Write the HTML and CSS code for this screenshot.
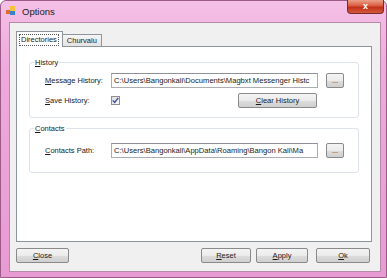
FILE: index.html
```html
<!DOCTYPE html>
<html>
<head>
    <title>Options</title>
    <link rel="stylesheet" href="styles.css">
</head>
<body>
    <div class="window">
        <div class="titlebar">
            <svg class="app-icon" width="10" height="10" viewBox="0 0 10 10">
                <rect x="0" y="4" width="4" height="4" fill="#e06a2a"/>
                <rect x="4" y="0" width="5" height="5" fill="#f2c23a"/>
                <rect x="4" y="5" width="5" height="4" fill="#3b7fd0"/>
            </svg>
            <span class="title">Options</span>
            <div class="close-btn">x</div>
        </div>

        <div class="client">
            <div class="tabs">
                <div class="tab selected"><span class="focus">Directories</span></div>
                <div class="tab">Churvalu</div>
            </div>
            <div class="tab-page">
                <div class="group history">
                    <span class="group-title"><u>H</u>istory</span>
                    <div class="row">
                        <span class="label"><u>M</u>essage History:</span>
                        <div class="textbox">C:\Users\Bangonkali\Documents\Magbxt Messenger Histc</div>
                        <div class="button small">...</div>
                    </div>
                    <div class="row">
                        <span class="label"><u>S</u>ave History:</span>
                        <div class="field">
                            <div class="checkbox">
                                <svg width="7" height="7" viewBox="0 0 7 7">
                                    <path d="M0.8 3.4 L2.7 5.5 L6.3 0.9" fill="none" stroke="#3a4fa0" stroke-width="1.4"/>
                                </svg>
                            </div>
                            <div class="button clear"><u>C</u>lear History</div>
                        </div>
                    </div>
                </div>

                <div class="group contacts">
                    <span class="group-title"><u>C</u>ontacts</span>
                    <div class="row">
                        <span class="label"><u>C</u>ontacts Path:</span>
                        <div class="textbox">C:\Users\Bangonkali\AppData\Roaming\Bangon Kali\Ma</div>
                        <div class="button small">...</div>
                    </div>
                </div>
            </div>

            <div class="footer">
                <div class="button wide"><u>C</u>lose</div>
                <div class="spacer"></div>
                <div class="button wide reset"><u>R</u>eset</div>
                <div class="button wide apply"><u>A</u>pply</div>
                <div class="button wide ok"><u>O</u>k</div>
            </div>
        </div>
    </div>
</body>
</html>
```

FILE: styles.css
```css
body {
    margin: 0;
    font-family: "Liberation Sans", Arial, sans-serif;
    font-size: 7.5px;
    color: #1a1a1a;
    overflow: hidden;
}
.window {
    width: 387px;
    height: 278px;
    box-sizing: border-box;
    padding: 0 5px 5px 8px;
    background: linear-gradient(180deg, #f4c0e6 0%, #eeaadc 25%, #e79bd2 100%);
    border: 1px solid #9c5a88;
    border-radius: 6px 6px 0 0;
    display: flex;
    flex-direction: column;
}
.titlebar {
    height: 21px;
    display: flex;
    align-items: flex-start;
    margin-left: -3px;
    margin-right: -3px;
}
.app-icon {
    margin-top: 5px;
    margin-right: 6px;
}
.title {
    font-size: 9.5px;
    color: #202020;
    margin-top: 5px;
}
.close-btn {
    margin-left: auto;
    width: 37px;
    height: 14px;
    margin-top: -1px;
    background: linear-gradient(180deg, #eba08a 0%, #db5a40 45%, #c1301a 55%, #d25a3c 100%);
    border: 1px solid #7a2a2a;
    border-top: none;
    border-radius: 0 0 4px 4px;
    color: #fff;
    font-weight: bold;
    font-size: 9px;
    text-align: center;
    line-height: 12px;
    box-sizing: border-box;
}
.client {
    flex: 1;
    background: #f0f0f0;
    border: 1px solid #b58aa8;
    padding: 8px 10px 0 6px;
    display: flex;
    flex-direction: column;
}
.tabs {
    display: flex;
    align-items: flex-end;
    height: 15px;
    margin-left: 1px;
}
.tab {
    height: 12px;
    padding: 0 4px;
    border: 1px solid #8f939c;
    border-bottom: none;
    background: linear-gradient(180deg, #f6f6f6, #e3e3e3);
    line-height: 12px;
    box-sizing: border-box;
    margin-left: -1px;
}
.tab.selected {
    background: #fff;
    padding: 2px 3px 0 2px;
    position: relative;
    z-index: 1;
    margin-bottom: -1px;
    height: 16px;
    margin-left: -1px;
}
.focus {
    display: block;
    border: 1px dotted #555;
    padding: 0 1px;
    line-height: 10px;
}
.tab-page {
    width: 356px;
    height: 196px;
    box-sizing: border-box;
    border: 1px solid #8f939c;
    background: #fff;
    padding: 15px 12px 0 12px;
}
.group {
    position: relative;
    border: 1px solid #dde3e8;
    border-radius: 3px;
    padding-left: 15px;
}
.group.history {
    height: 56px;
    box-sizing: border-box;
    padding-top: 10px;
}
.group.contacts {
    margin-top: 10px;
    height: 45px;
    box-sizing: border-box;
    padding-top: 14px;
}
.group-title {
    position: absolute;
    top: -5px;
    left: 4px;
    padding: 0 1px;
    background: #fff;
    line-height: 9px;
}
.row {
    display: flex;
    align-items: center;
    height: 15px;
}
.row + .row {
    margin-top: 5px;
}
.label {
    width: 66px;
    flex-shrink: 0;
}
.textbox {
    width: 207px;
    height: 15px;
    box-sizing: border-box;
    border: 1px solid #abadb3;
    border-top-color: #8e9198;
    padding: 0 2px;
    font-size: 7.6px;
    line-height: 13px;
    white-space: nowrap;
    overflow: hidden;
    background: #fff;
}
.field {
    width: 207px;
    display: flex;
    align-items: center;
    justify-content: space-between;
}
.checkbox {
    width: 9px;
    height: 9px;
    box-sizing: border-box;
    border: 1px solid #8e8f8f;
    background: linear-gradient(135deg, #dcdcdc, #f8f8f8);
    display: flex;
    align-items: center;
    justify-content: center;
}
.button {
    height: 15px;
    box-sizing: border-box;
    border: 1px solid #8a8a8a;
    border-radius: 2px;
    background: linear-gradient(180deg, #f4f4f4 0%, #ebebeb 50%, #dddddd 51%, #cfcfcf 100%);
    text-align: center;
    line-height: 13px;
}
.button.small {
    width: 18px;
    margin-left: 8px;
    font-size: 7px;
}
.button.clear {
    width: 79px;
    margin-right: 1px;
}
.footer {
    display: flex;
    margin-top: 6px;
}
.spacer {
    flex: 1;
}
.button.wide {
    width: 53px;
}
.button.reset {
    width: 50px;
}
.button.apply {
    width: 52px;
    margin-left: 5px;
}
.button.ok {
    width: 54px;
    margin-left: 8px;
}
```
